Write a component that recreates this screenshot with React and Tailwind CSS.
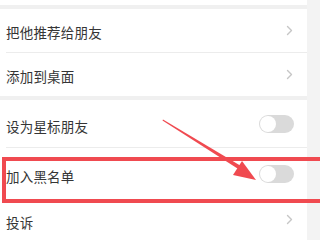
import React from 'react';

const font = { fontFamily: '"Noto Sans CJK SC", "Noto Sans", sans-serif' };

function Chevron() {
  return (
    <svg width="7" height="11" viewBox="0 0 7 11" className="shrink-0">
      <path d="M1.5 1.5l4 4-4 4" fill="none" stroke="#c6c6c6" strokeWidth="1.4" strokeLinecap="round" strokeLinejoin="round" />
    </svg>
  );
}

function Toggle() {
  return (
    <div className="w-[35px] h-[18px] rounded-full bg-[#dadada] flex items-center pl-[1px]">
      <div className="w-[16px] h-[16px] rounded-full bg-white"></div>
    </div>
  );
}

function Row({ label, height, right }) {
  return (
    <div className={`flex items-center justify-between pl-[6px] ${height}`}>
      <span className="pt-[4px] text-[13.5px] leading-[18px] text-[#353535] tracking-[0.2px]">{label}</span>
      {right}
    </div>
  );
}

export default function App() {
  return (
    <div className="relative w-[320px] h-[240px] overflow-hidden bg-[#f0f0f0] flex" style={font}>
      <div className="w-[307px] flex flex-col shrink-0">
        <div className="h-[8px] bg-white"></div>
        <div className="h-[6px]"></div>
        <div className="bg-white">
          <Row label="把他推荐给朋友" height="h-[43px] pr-[14px]" right={<Chevron />} />
          <div className="ml-[6px] h-px bg-[#ececec]"></div>
          <Row label="添加到桌面" height="h-[43px] pr-[14px]" right={<Chevron />} />
        </div>
        <div className="h-[7px]"></div>
        <div className="bg-white flex-1">
          <Row label="设为星标朋友" height="h-[47px] pr-[13px]" right={<Toggle />} />
          <div className="ml-[6px] h-px bg-[#ececec]"></div>
          <Row label="加入黑名单" height="h-[51px] pr-[13px]" right={<Toggle />} />
          <Row label="投诉" height="h-[41px] pr-[14px]" right={<Chevron />} />
        </div>
      </div>
      <div className="flex-1 bg-[#f3f3f3]"></div>

      {/* red highlight box */}
      <div className="absolute left-[2px] top-[157px] w-[330px] h-[46px] border-4 border-[#f04a50]"></div>

      {/* arrow */}
      <svg className="absolute left-0 top-0" width="320" height="240" viewBox="0 0 320 240">
        <polygon points="163,119.5 241,166 239,169.5 162.5,120.5" fill="#f04a50" />
        <polygon points="256,180 233,175 242,161" fill="#f04a50" />
      </svg>
    </div>
  );
}
